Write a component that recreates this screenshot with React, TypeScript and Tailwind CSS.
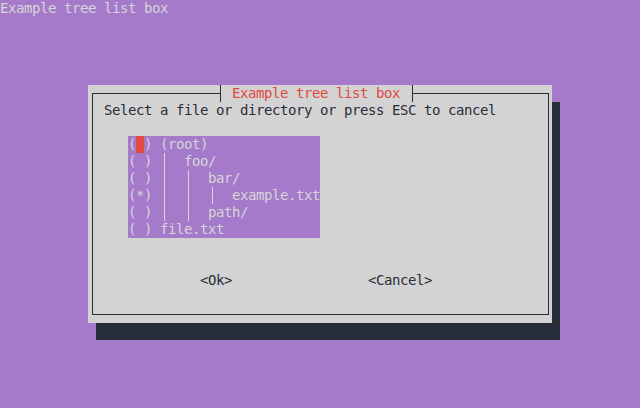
const purple = "bg-[#a57aca]"

function Bar() {
  return <span className="inline-block h-[17px] w-[20px] ml-[4px] border-l border-[#d6d6d6] align-top" />
}

function Row({ mark, depth, name, cursor }: { mark: string; depth: number; name: string; cursor?: boolean }) {
  return (
    <div className="flex h-[17px] whitespace-pre">
      {cursor ? (
        <>
          <span>(</span>
          <span className="inline-block w-[8px] h-[17px] bg-[#e2493f]" />
          <span>) </span>
        </>
      ) : (
        <span>{mark} </span>
      )}
      {Array.from({ length: depth }).map((_, i) => (
        <Bar key={i} />
      ))}
      <span>{name}</span>
    </div>
  )
}

export default function App() {
  return (
    <div
      className={`w-[640px] h-[408px] overflow-hidden ${purple} text-[14px] tracking-[-0.43px] leading-[17px] text-[#d6d6d6]`}
      style={{ fontFamily: '"DejaVu Sans Mono", "Liberation Mono", monospace' }}
    >
      <div className="h-[17px] whitespace-pre">Example tree list box</div>

      <div className="ml-[88px] mt-[68px] w-[464px] h-[238px] bg-[#d3d3d3] shadow-[8px_17px_0_0_#272e3a] pt-[8px] pl-[4px]">
        <div className="relative w-[457px] h-[222px] border border-[#272e3a] text-[#272e3a]">
          {/* title */}
          <div className="absolute left-[127px] top-[-9px] w-[193px] h-[17px] bg-[#d3d3d3] border-x border-[#272e3a] pl-[11px] text-[#e2493f] whitespace-pre">
            Example tree list box
          </div>

          <div className="pl-[11px] pt-[8px]">
            <div className="h-[17px] whitespace-pre">Select a file or directory or press ESC to cancel</div>

            <div className={`mt-[17px] ml-[24px] w-[192px] h-[102px] ${purple} text-[#d6d6d6]`}>
              <Row mark="( )" depth={0} name="(root)" cursor />
              <Row mark="( )" depth={1} name="foo/" />
              <Row mark="( )" depth={2} name="bar/" />
              <Row mark="(*)" depth={3} name="example.txt" />
              <Row mark="( )" depth={2} name="path/" />
              <Row mark="( )" depth={0} name="file.txt" />
            </div>

            <div className="mt-[34px] flex h-[17px] whitespace-pre">
              <span className="ml-[96px] w-[168px]">{"<Ok>"}</span>
              <span>{"<Cancel>"}</span>
            </div>
          </div>
        </div>
      </div>
    </div>
  )
}
